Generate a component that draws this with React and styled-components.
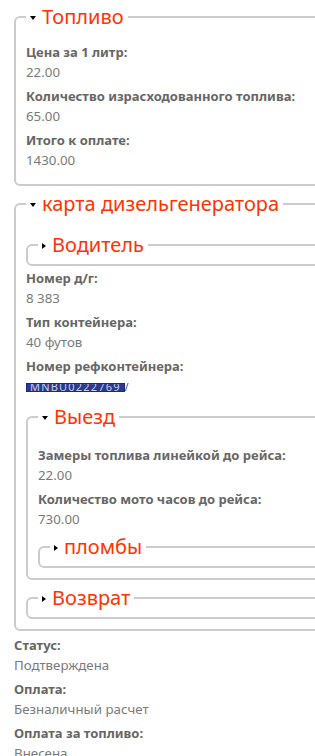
import React from 'react';
import styled, { createGlobalStyle } from 'styled-components';

const GlobalStyle = createGlobalStyle`
  html, body {
    margin: 0;
    padding: 0;
    overflow: hidden;
    background: #fff;
  }
  body {
    font-family: "Noto Sans", "Open Sans", sans-serif;
  }
`;

const Page = styled.div`
  width: 480px;
  padding: 3px 0 0 14px;
`;

const Fieldset = styled.fieldset`
  margin: ${p => (p.$collapsed ? '0' : '0 0 4px 0')};
  padding: ${p => (p.$collapsed ? '0 10px 6px' : `0 10px ${p.$bottom || 10}px`)};
  border: 2px solid #ccc;
  border-radius: 6px;
  min-width: 0;
`;

const Legend = styled.legend`
  display: flex;
  align-items: center;
  padding: 0 4px;
  font-size: 20px;
  line-height: 27px;
  color: #ff3300;
`;

const Arrow = styled.span`
  width: 0;
  height: 0;
  margin-right: 6px;
  margin-top: 2px;
  ${p =>
    p.$open
      ? `border-left: 3.5px solid transparent;
         border-right: 3.5px solid transparent;
         border-top: 4px solid #000;`
      : `border-top: 3.5px solid transparent;
         border-bottom: 3.5px solid transparent;
         border-left: 4px solid #000;`}
`;

const Body = styled.div`
  padding-top: ${p => p.$top || 12}px;
`;

const Label = styled.div`
  font-size: 13px;
  font-weight: 700;
  line-height: 20px;
  color: #666;
`;

const Value = styled.div`
  font-size: 13.3px;
  line-height: 20px;
  color: #7a7a7a;
  margin-bottom: ${p => p.$mb || 4}px;
`;

const Gap = styled.div`
  height: ${p => p.$h}px;
`;

const Marked = styled.span`
  display: inline-block;
  height: 7px;
  overflow: hidden;
  background: #2b3a8f;
  border: 1px solid #1e2a78;
  color: #c8cde8;
  font-size: 11px;
  line-height: 6px;
  padding: 0 3px;
  letter-spacing: 1.2px;
  vertical-align: middle;
`;

const Slash = styled.span`
  color: #2b3a8f;
  font-size: 10px;
  vertical-align: middle;
`;

const Section = ({ title, open, top, bottom, children }) => (
  <Fieldset $collapsed={!open} $bottom={bottom}>
    <Legend>
      <Arrow $open={open} />
      {title}
    </Legend>
    {open && <Body $top={top}>{children}</Body>}
  </Fieldset>
);

const Field = ({ label, value }) => (
  <>
    <Label>{label}</Label>
    <Value>{value}</Value>
  </>
);

export default function App() {
  return (
    <Page>
      <GlobalStyle />
      <Section title="Топливо" open>
        <Field label="Цена за 1 литр:" value="22.00" />
        <Field label="Количество израсходованного топлива:" value="65.00" />
        <Field label="Итого к оплате:" value="1430.00" />
      </Section>

      <Section title="карта дизельгенератора" open top={14} bottom={10}>
        <Section title="Водитель" />
        <Gap $h={2} />
        <Field label="Номер д/г:" value="8 383" />
        <Field label="Тип контейнера:" value="40 футов" />
        <Label>Номер рефконтейнера:</Label>
        <Value $mb={6}>
          <Marked>MNBU0222769</Marked>
          <Slash>/</Slash>
        </Value>
        <Section title="Выезд" open top={15} bottom={10}>
          <Field label="Замеры топлива линейкой до рейса:" value="22.00" />
          <Field label="Количество мото часов до рейса:" value="730.00" />
          <Section title="пломбы" />
        </Section>
        <Section title="Возврат" />
      </Section>

      <Field label="Статус:" value="Подтверждена" />
      <Field label="Оплата:" value="Безналичный расчет" />
      <Field label="Оплата за топливо:" value="Внесена" />
    </Page>
  );
}
